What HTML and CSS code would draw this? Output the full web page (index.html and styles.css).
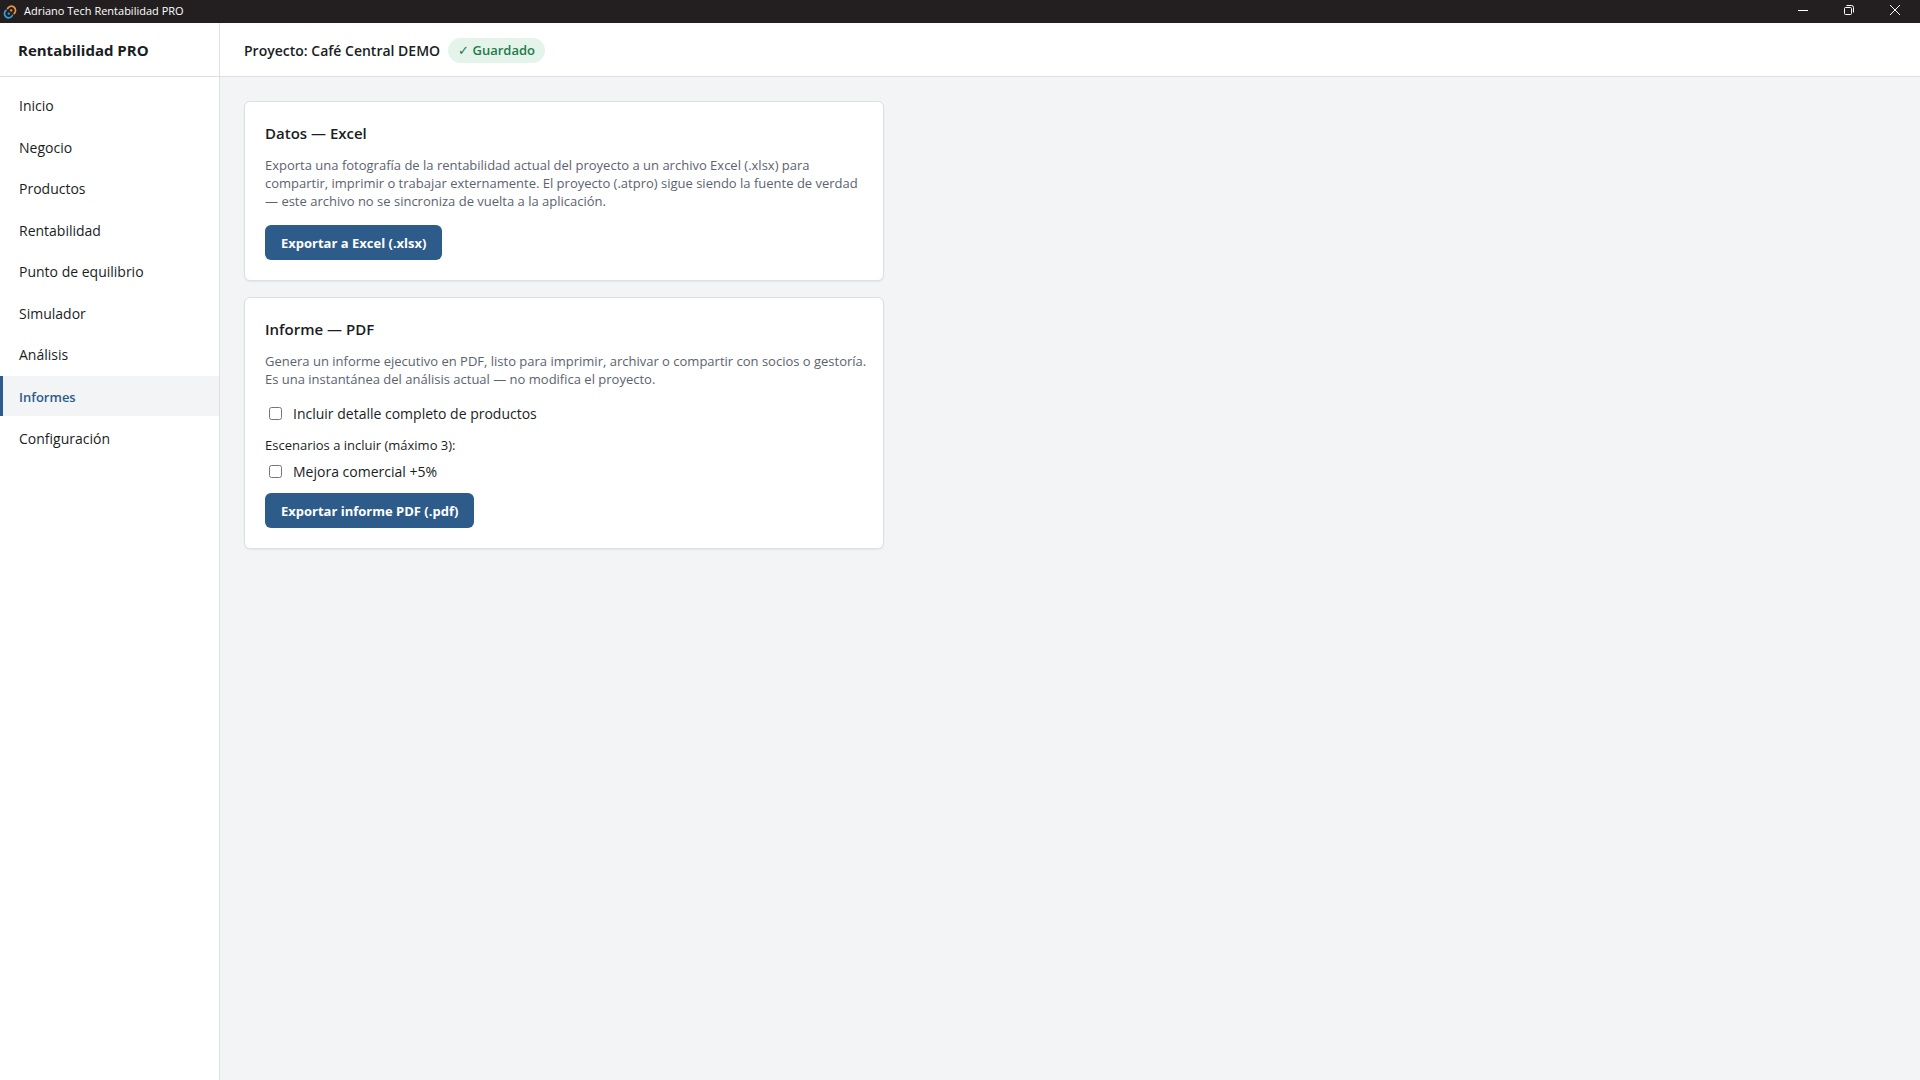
FILE: index.html
```html
<!DOCTYPE html>
<html lang="es">
<head>
    <meta charset="UTF-8">
    <meta name="viewport" content="width=device-width, initial-scale=1.0">
    <title>Adriano Tech Rentabilidad PRO</title>
    <link rel="stylesheet" href="styles.css">
</head>
<body>
    <div class="titlebar">
        <svg class="app-icon" viewBox="0 0 14 14" fill="none" stroke-width="1.7">
            <path d="M4.3 4.4A4.2 4.2 0 1 1 10.6 9" stroke="#e8963e"/>
            <path d="M9.7 9.6A4.2 4.2 0 1 1 3.4 5" stroke="#2f9fe0"/>
            <circle cx="8.2" cy="5.4" r="1.2" fill="#e8963e"/>
            <circle cx="5.8" cy="8.6" r="1.2" fill="#2f9fe0"/>
        </svg>
        <span class="window-title">Adriano Tech Rentabilidad PRO</span>
        <div class="window-controls">
            <button type="button" aria-label="Minimizar">
                <svg viewBox="0 0 12 12"><path d="M1 6.5h10"/></svg>
            </button>
            <button type="button" aria-label="Restaurar">
                <svg viewBox="0 0 12 12"><rect x="1.5" y="3.5" width="7" height="7" rx="1"/><path d="M3.5 1.5h5a2 2 0 0 1 2 2v5"/></svg>
            </button>
            <button type="button" aria-label="Cerrar">
                <svg viewBox="0 0 12 12"><path d="M1 1l10 10M11 1L1 11"/></svg>
            </button>
        </div>
    </div>
    <div class="app">
        <aside class="sidebar">
            <div class="brand">Rentabilidad PRO</div>
            <nav class="nav">
                <a href="#inicio">Inicio</a>
                <a href="#negocio">Negocio</a>
                <a href="#productos">Productos</a>
                <a href="#rentabilidad">Rentabilidad</a>
                <a href="#equilibrio">Punto de equilibrio</a>
                <a href="#simulador">Simulador</a>
                <a href="#analisis">Análisis</a>
                <a href="#informes" class="active">Informes</a>
                <a href="#configuracion">Configuración</a>
            </nav>
        </aside>
        <div class="main">
            <header class="topbar">
                <span class="project">Proyecto: Café Central DEMO</span>
                <span class="badge"><span class="tick">✓</span> Guardado</span>
            </header>
            <main class="content">
                <section class="card">
                    <h2>Datos — Excel</h2>
                    <p>Exporta una fotografía de la rentabilidad actual del proyecto a un archivo Excel (.xlsx) para<br>
                    compartir, imprimir o trabajar externamente. El proyecto (.atpro) sigue siendo la fuente de verdad<br>
                    — este archivo no se sincroniza de vuelta a la aplicación.</p>
                    <button type="button" class="btn">Exportar a Excel (.xlsx)</button>
                </section>
                <section class="card">
                    <h2>Informe — PDF</h2>
                    <p>Genera un informe ejecutivo en PDF, listo para imprimir, archivar o compartir con socios o gestoría.<br>
                    Es una instantánea del análisis actual — no modifica el proyecto.</p>
                    <label class="check"><input type="checkbox">Incluir detalle completo de productos</label>
                    <fieldset class="scenarios">
                        <legend>Escenarios a incluir (máximo 3):</legend>
                        <label class="check"><input type="checkbox">Mejora comercial +5%</label>
                    </fieldset>
                    <button type="button" class="btn">Exportar informe PDF (.pdf)</button>
                </section>
            </main>
        </div>
    </div>
</body>
</html>
```
FILE: styles.css
```css
* {
    box-sizing: border-box;
}
body {
    display: flex;
    flex-direction: column;
    min-height: 100vh;
    margin: 0;
    font-family: "Segoe UI", "Open Sans", "Noto Sans", sans-serif;
    font-size: 13px;
    line-height: 1.5;
    color: #1a1d23;
    background-color: #f3f4f6;
}
.titlebar {
    display: flex;
    align-items: center;
    height: 23px;
    padding-left: 3px;
    background-color: #231f20;
    color: #fff;
}
.app-icon {
    width: 14px;
    height: 14px;
    margin-right: 7px;
}
.window-title {
    font-size: 11px;
}
.window-controls {
    display: flex;
    align-self: flex-start;
    margin-left: auto;
    margin-right: 2px;
}
.window-controls button {
    display: flex;
    align-items: center;
    justify-content: center;
    width: 46px;
    height: 20px;
    padding: 0;
    border: none;
    background: none;
}
.window-controls svg {
    width: 12px;
    height: 12px;
    fill: none;
    stroke: #fff;
}
.app {
    display: flex;
    flex: 1;
}
.sidebar {
    width: 220px;
    background-color: #fff;
    border-right: 1px solid #dcdfe4;
}
.brand {
    display: flex;
    align-items: center;
    height: 54px;
    padding: 2px 18px 0;
    border-bottom: 1px solid #dcdfe4;
    font-size: 15px;
    font-weight: 700;
}
.nav {
    display: flex;
    flex-direction: column;
    gap: 2px;
    padding: 8px 0;
}
.nav a {
    padding: 12px 16px 10px;
    border-left: 3px solid transparent;
    color: inherit;
    font-size: 14px;
    line-height: 1.25;
    text-decoration: none;
}
.nav a.active {
    border-left-color: #2d5b8a;
    background-color: #f3f4f6;
    color: #2d5b8a;
    font-size: 13px;
    line-height: 18px;
    font-weight: 600;
}
.main {
    flex: 1;
}
.topbar {
    display: flex;
    align-items: center;
    gap: 8px;
    height: 54px;
    padding: 2px 24px 0;
    background-color: #fff;
    border-bottom: 1px solid #dcdfe4;
}
.project {
    font-size: 14px;
    font-weight: 600;
}
.badge {
    padding: 3px 10px;
    border-radius: 13px;
    background-color: #e4f4ea;
    color: #237a4b;
    font-weight: 600;
}
.tick {
    font-weight: 400;
}
.content {
    display: flex;
    flex-direction: column;
    gap: 16px;
    padding: 24px;
}
.card {
    display: flex;
    flex-direction: column;
    align-items: flex-start;
    max-width: 640px;
    padding: 20px 12px 20px 20px;
    background-color: #fff;
    border: 1px solid #dcdfe4;
    border-radius: 6px;
    box-shadow: 0 1px 2px rgba(0, 0, 0, 0.06);
}
.card h2 {
    margin: 0 0 12px;
    font-size: 15px;
    line-height: 22px;
    font-weight: 600;
}
.card p {
    margin: 0 0 15px;
    line-height: 18px;
    color: #5c6370;
}
.check {
    display: flex;
    align-items: center;
    gap: 11px;
    font-size: 14px;
    line-height: 21px;
}
.check input {
    width: 13px;
    height: 13px;
    margin: 0 0 0 4px;
}
.scenarios {
    margin: 12px 0 11px;
    padding: 0;
    border: none;
}
.scenarios legend {
    margin-bottom: 7px;
    padding: 0;
    line-height: 18px;
}
.btn {
    height: 35px;
    padding: 0 16px;
    border: none;
    border-radius: 6px;
    background-color: #2d5b8a;
    color: #fff;
    font-family: inherit;
    font-size: 13px;
    font-weight: 700;
    cursor: pointer;
}
```
